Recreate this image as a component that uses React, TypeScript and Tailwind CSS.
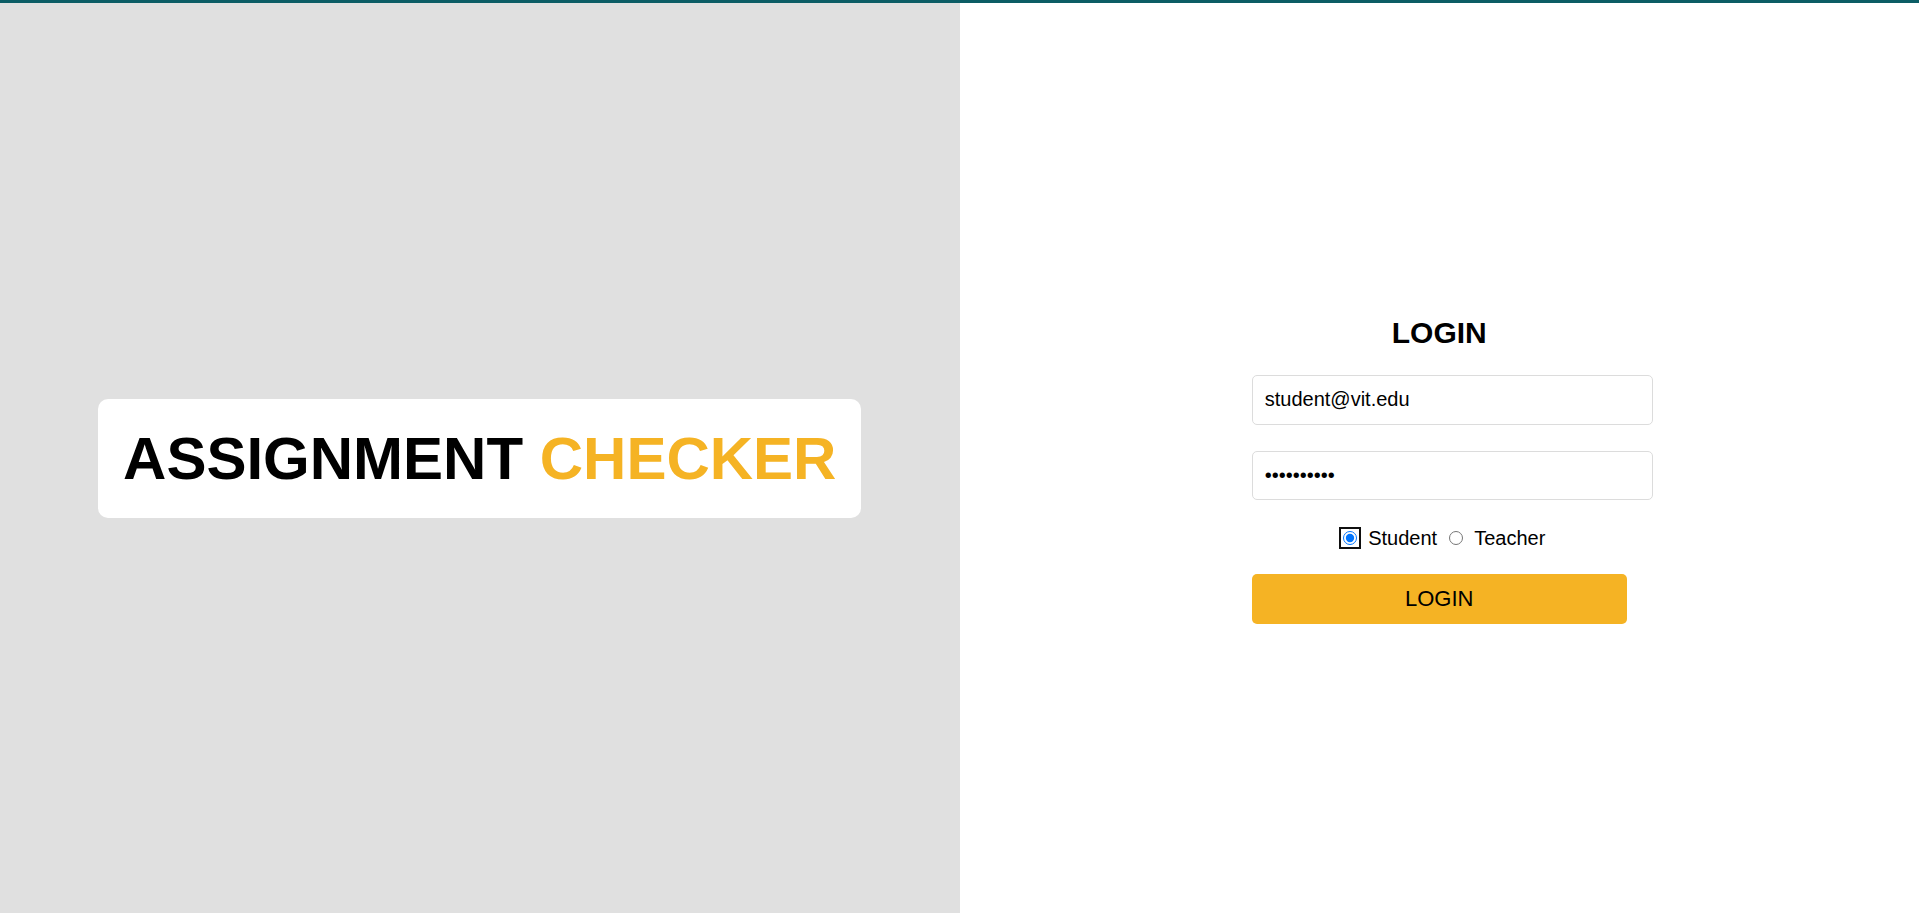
import React from "react";

export default function App() {
  return (
    <div
      className="flex h-[913px] flex-col border-t-[3px] border-[#0c5d65] bg-white"
      style={{ fontFamily: '"Liberation Sans", Arial, sans-serif' }}
    >
      <div className="grid flex-1 grid-cols-2">
        <div className="flex items-center justify-center bg-[#e0e0e0]">
          <div className="rounded-[10px] bg-white px-[25px] py-[25px]">
            <h1 className="text-[60px] font-bold leading-[normal] text-black">
              ASSIGNMENT <span className="text-[#f5b324]">CHECKER</span>
            </h1>
          </div>
        </div>

        <div className="flex items-center justify-center">
          <form className="flex w-[375px] flex-col items-start">
            <h2 className="mt-[23px] mb-[25px] w-full text-center text-[30px] font-bold leading-[normal] text-black">
              LOGIN
            </h2>
            <input
              type="email"
              readOnly
              value="student@vit.edu"
              className="h-[50px] w-[401px] rounded-[5px] border border-[#dcdcdc] bg-white px-3 text-[20px] text-black outline-none"
            />
            <input
              type="password"
              readOnly
              value="password12"
              className="mt-[26px] h-[49px] w-[401px] rounded-[5px] border border-[#dcdcdc] bg-white px-3 text-[20px] text-black outline-none"
            />
            <div className="mt-[27px] flex w-full items-center justify-center pl-[10px] text-[20px] leading-[23px] text-black">
              <input
                type="radio"
                name="role"
                defaultChecked
                className="m-0 h-[14px] w-[14px] rounded-[6px] outline-2 outline-offset-[2px] outline-[#101010]"
              />
              <span className="ml-[11px]">Student</span>
              <input
                type="radio"
                name="role"
                className="m-0 ml-[12px] h-[14px] w-[14px]"
              />
              <span className="ml-[11px]">Teacher</span>
            </div>
            <button
              type="button"
              className="mt-[24px] h-[50px] w-[375px] rounded-[5px] bg-[#f5b324] text-[22px] text-black"
            >
              LOGIN
            </button>
          </form>
        </div>
      </div>
    </div>
  );
}
